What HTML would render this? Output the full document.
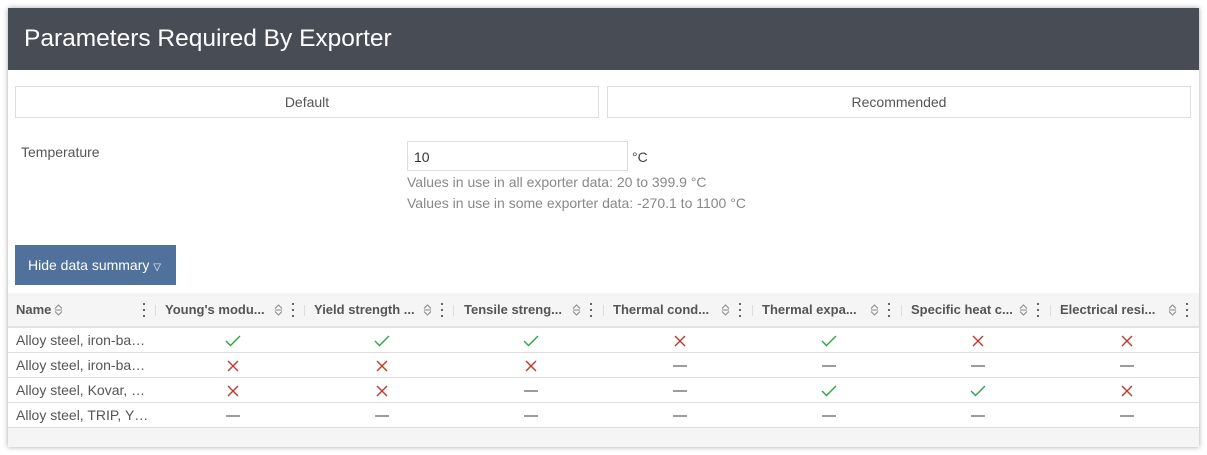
<!DOCTYPE html>
<html><head><style>
*{box-sizing:border-box;margin:0;padding:0}
body{width:1207px;height:455px;background:#fff;font-family:"Liberation Sans",Arial,sans-serif;position:relative;overflow:hidden}
.panel{position:absolute;left:8px;top:8px;width:1191px;height:439px;background:#fff;box-shadow:0 0 5px rgba(0,0,0,.35)}
.hdr{position:absolute;left:0;top:0;width:1191px;height:62px;background:#484c55;color:#fff;font-size:24.5px;padding:17px 0 0 16px}
.tab{position:absolute;top:78px;height:32px;border:1px solid #ddd;text-align:center;line-height:30px;font-size:14px;color:#555}
.abs{position:absolute}
.help{font-size:14px;color:#888}
.btn{position:absolute;left:7px;top:237px;width:161px;height:40px;background:#50719b;color:#fff;font-size:14px;line-height:40px;padding-left:13px}
.th{position:absolute;top:285px;height:35px;width:1191px;background:#f5f5f5;border-bottom:2px solid #e2e2e2}
.hc{position:absolute;top:0;height:33px;line-height:33px;font-size:13px;font-weight:bold;color:#555;white-space:nowrap}
.sep{position:absolute;top:12px;width:1px;height:11px;background:#ddd}
.kb{position:absolute;top:10px;width:3px;height:14px}
.kb i{display:block;width:2px;height:2px;background:#666;margin-bottom:4px}
.so{position:absolute;top:11px}
.row{position:absolute;left:0;width:1191px;height:25px;border-bottom:1px solid #ddd;font-size:14px;color:#555}
.row .n{position:absolute;left:8px;top:4px}
.ic{position:absolute;top:6px;width:149px;text-align:center;height:13px}
.ic svg{display:inline-block}
</style></head><body>
<svg width="0" height="0" style="position:absolute">
<defs>
<symbol id="ok" viewBox="0 0 16 12"><path d="M1 6 L5.5 10.5 L15 1" fill="none" stroke="#2aa746" stroke-width="1.4"/></symbol>
<symbol id="no" viewBox="0 0 12 12"><path d="M1 1 L11 11 M11 1 L1 11" fill="none" stroke="#c0392b" stroke-width="1.4"/></symbol>
<symbol id="na" viewBox="0 0 14 12"><path d="M0 6 H14" fill="none" stroke="#666" stroke-width="1.3"/></symbol>
<symbol id="so" viewBox="0 0 9 12"><path d="M1 4.5 L4.5 1 L8 4.5 M1 7.5 L4.5 11 L8 7.5 M1 6 H8" fill="none" stroke="#888" stroke-width="1"/></symbol>
</defs></svg>
<div class="panel">
<div class="hdr">Parameters Required By Exporter</div>
<div class="tab" style="left:7px;width:584px">Default</div>
<div class="tab" style="left:599px;width:584px">Recommended</div>
<div class="abs" style="left:13px;top:136px;font-size:14px;color:#555">Temperature</div>
<div class="abs" style="left:399px;top:133px;width:221px;height:30px;border:1px solid #ddd;font-size:14px;color:#333;padding:7px 6px">10</div>
<div class="abs" style="left:624px;top:141px;font-size:14px;color:#444">°C</div>
<div class="abs help" style="left:399px;top:166px">Values in use in all exporter data: 20 to 399.9 °C</div>
<div class="abs help" style="left:399px;top:187px">Values in use in some exporter data: -270.1 to 1100 °C</div>
<div class="btn">Hide data summary <span style="font-size:10px">▽</span></div>
<div class="th">
<div class="hc" style="left:8px">Name</div><svg class="so" style="left:46px" width="9" height="12"><use href="#so"/></svg>
<span class="kb" style="left:135px"><i></i><i></i><i></i></span><div class="sep" style="left:147px"></div>
<div class="hc" style="left:157px">Young's modu...</div><svg class="so" style="left:266px" width="9" height="12"><use href="#so"/></svg><span class="kb" style="left:284px"><i></i><i></i><i></i></span><div class="sep" style="left:296px"></div>
<div class="hc" style="left:306px">Yield strength ...</div><svg class="so" style="left:415px" width="9" height="12"><use href="#so"/></svg><span class="kb" style="left:433px"><i></i><i></i><i></i></span><div class="sep" style="left:445px"></div>
<div class="hc" style="left:456px">Tensile streng...</div><svg class="so" style="left:564px" width="9" height="12"><use href="#so"/></svg><span class="kb" style="left:582px"><i></i><i></i><i></i></span><div class="sep" style="left:595px"></div>
<div class="hc" style="left:605px">Thermal cond...</div><svg class="so" style="left:713px" width="9" height="12"><use href="#so"/></svg><span class="kb" style="left:731px"><i></i><i></i><i></i></span><div class="sep" style="left:744px"></div>
<div class="hc" style="left:754px">Thermal expa...</div><svg class="so" style="left:862px" width="9" height="12"><use href="#so"/></svg><span class="kb" style="left:880px"><i></i><i></i><i></i></span><div class="sep" style="left:893px"></div>
<div class="hc" style="left:903px">Specific heat c...</div><svg class="so" style="left:1011px" width="9" height="12"><use href="#so"/></svg><span class="kb" style="left:1029px"><i></i><i></i><i></i></span><div class="sep" style="left:1042px"></div>
<div class="hc" style="left:1052px">Electrical resi...</div><svg class="so" style="left:1160px" width="9" height="12"><use href="#so"/></svg><span class="kb" style="left:1178px"><i></i><i></i><i></i></span>
</div>
<div class="row" style="top:320px"><span class="n">Alloy steel, iron-ba…</span>
<span class="ic" style="left:150px"><svg width="16" height="12"><use href="#ok"/></svg></span><span class="ic" style="left:299px"><svg width="16" height="12"><use href="#ok"/></svg></span><span class="ic" style="left:448px"><svg width="16" height="12"><use href="#ok"/></svg></span><span class="ic" style="left:597px"><svg width="12" height="12"><use href="#no"/></svg></span><span class="ic" style="left:746px"><svg width="16" height="12"><use href="#ok"/></svg></span><span class="ic" style="left:895px"><svg width="12" height="12"><use href="#no"/></svg></span><span class="ic" style="left:1044px"><svg width="12" height="12"><use href="#no"/></svg></span></div>
<div class="row" style="top:345px"><span class="n">Alloy steel, iron-ba…</span>
<span class="ic" style="left:150px"><svg width="12" height="12"><use href="#no"/></svg></span><span class="ic" style="left:299px"><svg width="12" height="12"><use href="#no"/></svg></span><span class="ic" style="left:448px"><svg width="12" height="12"><use href="#no"/></svg></span><span class="ic" style="left:597px"><svg width="14" height="12"><use href="#na"/></svg></span><span class="ic" style="left:746px"><svg width="14" height="12"><use href="#na"/></svg></span><span class="ic" style="left:895px"><svg width="14" height="12"><use href="#na"/></svg></span><span class="ic" style="left:1044px"><svg width="14" height="12"><use href="#na"/></svg></span></div>
<div class="row" style="top:370px"><span class="n">Alloy steel, Kovar, …</span>
<span class="ic" style="left:150px"><svg width="12" height="12"><use href="#no"/></svg></span><span class="ic" style="left:299px"><svg width="12" height="12"><use href="#no"/></svg></span><span class="ic" style="left:448px"><svg width="14" height="12"><use href="#na"/></svg></span><span class="ic" style="left:597px"><svg width="14" height="12"><use href="#na"/></svg></span><span class="ic" style="left:746px"><svg width="16" height="12"><use href="#ok"/></svg></span><span class="ic" style="left:895px"><svg width="16" height="12"><use href="#ok"/></svg></span><span class="ic" style="left:1044px"><svg width="12" height="12"><use href="#no"/></svg></span></div>
<div class="row" style="top:395px"><span class="n">Alloy steel, TRIP, Y…</span>
<span class="ic" style="left:150px"><svg width="14" height="12"><use href="#na"/></svg></span><span class="ic" style="left:299px"><svg width="14" height="12"><use href="#na"/></svg></span><span class="ic" style="left:448px"><svg width="14" height="12"><use href="#na"/></svg></span><span class="ic" style="left:597px"><svg width="14" height="12"><use href="#na"/></svg></span><span class="ic" style="left:746px"><svg width="14" height="12"><use href="#na"/></svg></span><span class="ic" style="left:895px"><svg width="14" height="12"><use href="#na"/></svg></span><span class="ic" style="left:1044px"><svg width="14" height="12"><use href="#na"/></svg></span></div>
<div style="position:absolute;top:420px;left:0;width:1191px;height:19px;background:#f5f5f5"></div>
</div>
</body></html>
